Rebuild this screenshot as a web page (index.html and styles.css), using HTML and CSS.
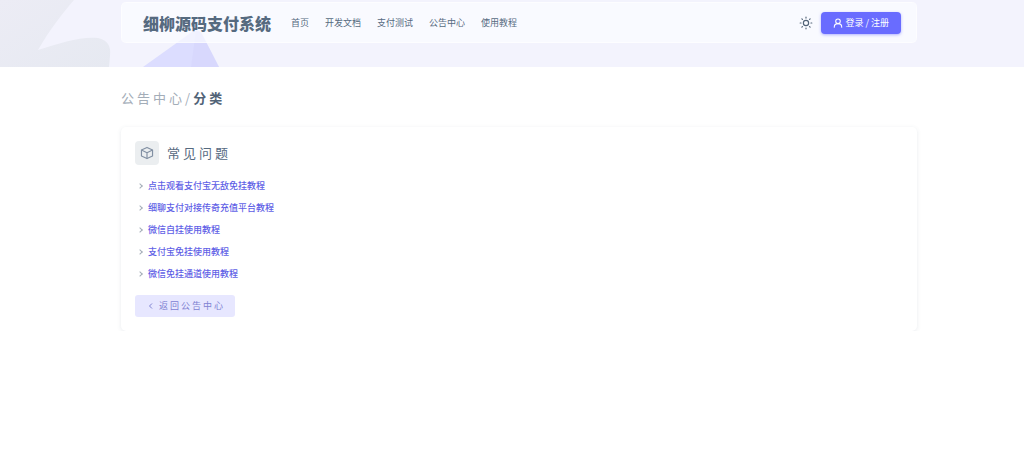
FILE: index.html
```html
<!DOCTYPE html>
<html lang="zh-CN">
  <head>
    <meta charset="utf-8">
    <meta name="viewport" content="width=device-width, initial-scale=1">
    <title>细柳源码支付系统</title>
    <link rel="stylesheet" href="styles.css">
  </head>

  <body>
    <header class="hero">
      <svg class="hero-bg" width="240" height="67" viewBox="0 0 240 67" aria-hidden="true">
        <defs>
          <linearGradient id="grey" x1="0" y1="0" x2="1" y2="1">
            <stop offset="0" stop-color="#ececf5" />
            <stop offset="1" stop-color="#e6e9f1" />
          </linearGradient>
        </defs>
        <path fill="url(#grey)" d="M0 0H74C62 14 50 29 38 50C60 43 82 36 98 38Q112 41 110 56L109 67H0Z" />
        <path fill="#dcddff" d="M143 67L192 32Q198 28 202 34L219 67Z" />
        <path fill="#d2d3fa" d="M196 30Q200 30 202 34L219 67H191Z" opacity=".4" />
      </svg>
      <div class="container">
        <nav class="navbar">
          <a class="brand" href="#">细柳源码支付系统</a>
          <ul class="menu">
            <li><a href="#">首页</a></li>
            <li><a href="#">开发文档</a></li>
            <li><a href="#">支付测试</a></li>
            <li><a href="#">公告中心</a></li>
            <li><a href="#">使用教程</a></li>
          </ul>
          <button class="theme" type="button" aria-label="切换主题">
            <svg width="14" height="14" viewBox="0 0 24 24" fill="none" stroke="currentColor" stroke-width="2" stroke-linecap="round">
              <circle cx="12" cy="12" r="4.5" />
              <path d="M12 2v1.500M12 20.500V22M2 12h1.500M20.500 12H22M4.900 4.900l1 1M18.100 18.100l1 1M4.900 19.100l1-1M18.100 5.900l1-1" />
            </svg>
          </button>
          <a class="login" href="#">
            <svg width="10" height="10" viewBox="0 0 24 24" fill="none" stroke="currentColor" stroke-width="2.5" stroke-linecap="round">
              <circle cx="12" cy="8" r="5.500" />
              <path d="M3 22c0-5 3-8.500 9-8.500s9 3.500 9 8.500" />
            </svg>
            登录 / 注册
          </a>
        </nav>
      </div>
    </header>

    <main class="container">
      <div class="breadcrumb"><a href="#">公告中心</a>/<strong>分类</strong></div>

      <section class="card">
        <div class="card-head">
          <span class="card-icon">
            <svg width="14" height="14" viewBox="0 0 24 24" fill="none" stroke="currentColor" stroke-width="2" stroke-linejoin="round">
              <path d="M12 2.500L21.500 7v10L12 21.500L2.500 17V7Z" />
              <path d="M2.500 7L12 11.500L21.500 7M12 11.500v10" />
            </svg>
          </span>
          <h1>常见问题</h1>
        </div>
        <ul class="articles">
          <li><a href="#">点击观看支付宝无敌免挂教程</a></li>
          <li><a href="#">细聊支付对接传奇充值平台教程</a></li>
          <li><a href="#">微信自挂使用教程</a></li>
          <li><a href="#">支付宝免挂使用教程</a></li>
          <li><a href="#">微信免挂通道使用教程</a></li>
        </ul>
        <a class="back" href="#">
          <svg width="8" height="8" viewBox="0 0 8 8" fill="none" stroke="currentColor">
            <path d="M5 1.500L2.500 4L5 6.500" />
          </svg>
          返回公告中心
        </a>
      </section>
    </main>
  </body>
</html>
```
FILE: styles.css
```css
* {
  box-sizing: border-box;
}
body {
  margin: 0;
  background: #fff;
  color: #566a7f;
  font: 9px/14px "Noto Sans CJK SC", sans-serif;
}
a {
  color: inherit;
  text-decoration: none;
}
ul {
  list-style: none;
  margin: 0;
  padding: 0;
}
svg {
  display: block;
}
.container {
  padding: 0 107px 0 121px;
}

.hero {
  position: relative;
  background: #f3f3fd;
  padding: 2px 0 24px;
}
.hero-bg {
  position: absolute;
  top: 0;
  left: 0;
}
.navbar {
  position: relative;
  display: flex;
  align-items: center;
  height: 41px;
  padding: 0 15px 0 21px;
  background: rgba(251, 252, 255, 0.7);
  border: 1px solid rgba(255, 255, 255, 0.5);
  border-radius: 5px;
}
.brand {
  font-size: 16px;
  font-weight: 900;
  line-height: 24px;
}
.menu {
  display: flex;
  gap: 16px;
  margin-left: 20px;
}
.theme {
  margin: 0 8px 0 auto;
  padding: 0;
  border: 0;
  background: none;
  color: #516377;
}
.login {
  display: flex;
  align-items: center;
  gap: 2px;
  padding: 4px 12px;
  border-radius: 4px;
  background: #696cff;
  box-shadow: 0 1px 3px rgba(105, 108, 255, 0.5);
  color: #fff;
}

.breadcrumb {
  padding: 21px 0 19px;
  font-size: 13px;
  line-height: 20px;
  letter-spacing: 3px;
  color: #a3adb8;
}
.breadcrumb strong {
  color: #516377;
}

.card {
  padding: 14px;
  border-radius: 5px;
  box-shadow: 0 1px 4px rgba(67, 89, 113, 0.12);
}
.card-head {
  display: flex;
  align-items: center;
  gap: 8px;
  margin-bottom: 10px;
}
.card-icon {
  display: grid;
  place-items: center;
  width: 24px;
  height: 24px;
  border-radius: 4px;
  background: #ebeef0;
  color: #8290a3;
}
.card-head h1 {
  margin: 0;
  font-size: 13px;
  font-weight: 400;
  line-height: 20px;
  letter-spacing: 3px;
}
.articles li {
  display: flex;
  align-items: center;
  gap: 6px;
  height: 22px;
  padding-left: 3px;
  color: #5f61e6;
  font-weight: 500;
}
.articles li::before {
  content: "";
  width: 3px;
  height: 3px;
  border: solid #a3adb8;
  border-width: 1px 1px 0 0;
  transform: rotate(45deg);
}
.back {
  display: inline-flex;
  align-items: center;
  gap: 4px;
  margin-top: 10px;
  padding: 4px 10px 4px 12px;
  border-radius: 3px;
  background: #e7e7ff;
  color: #8082d2;
  letter-spacing: 2px;
}
```
